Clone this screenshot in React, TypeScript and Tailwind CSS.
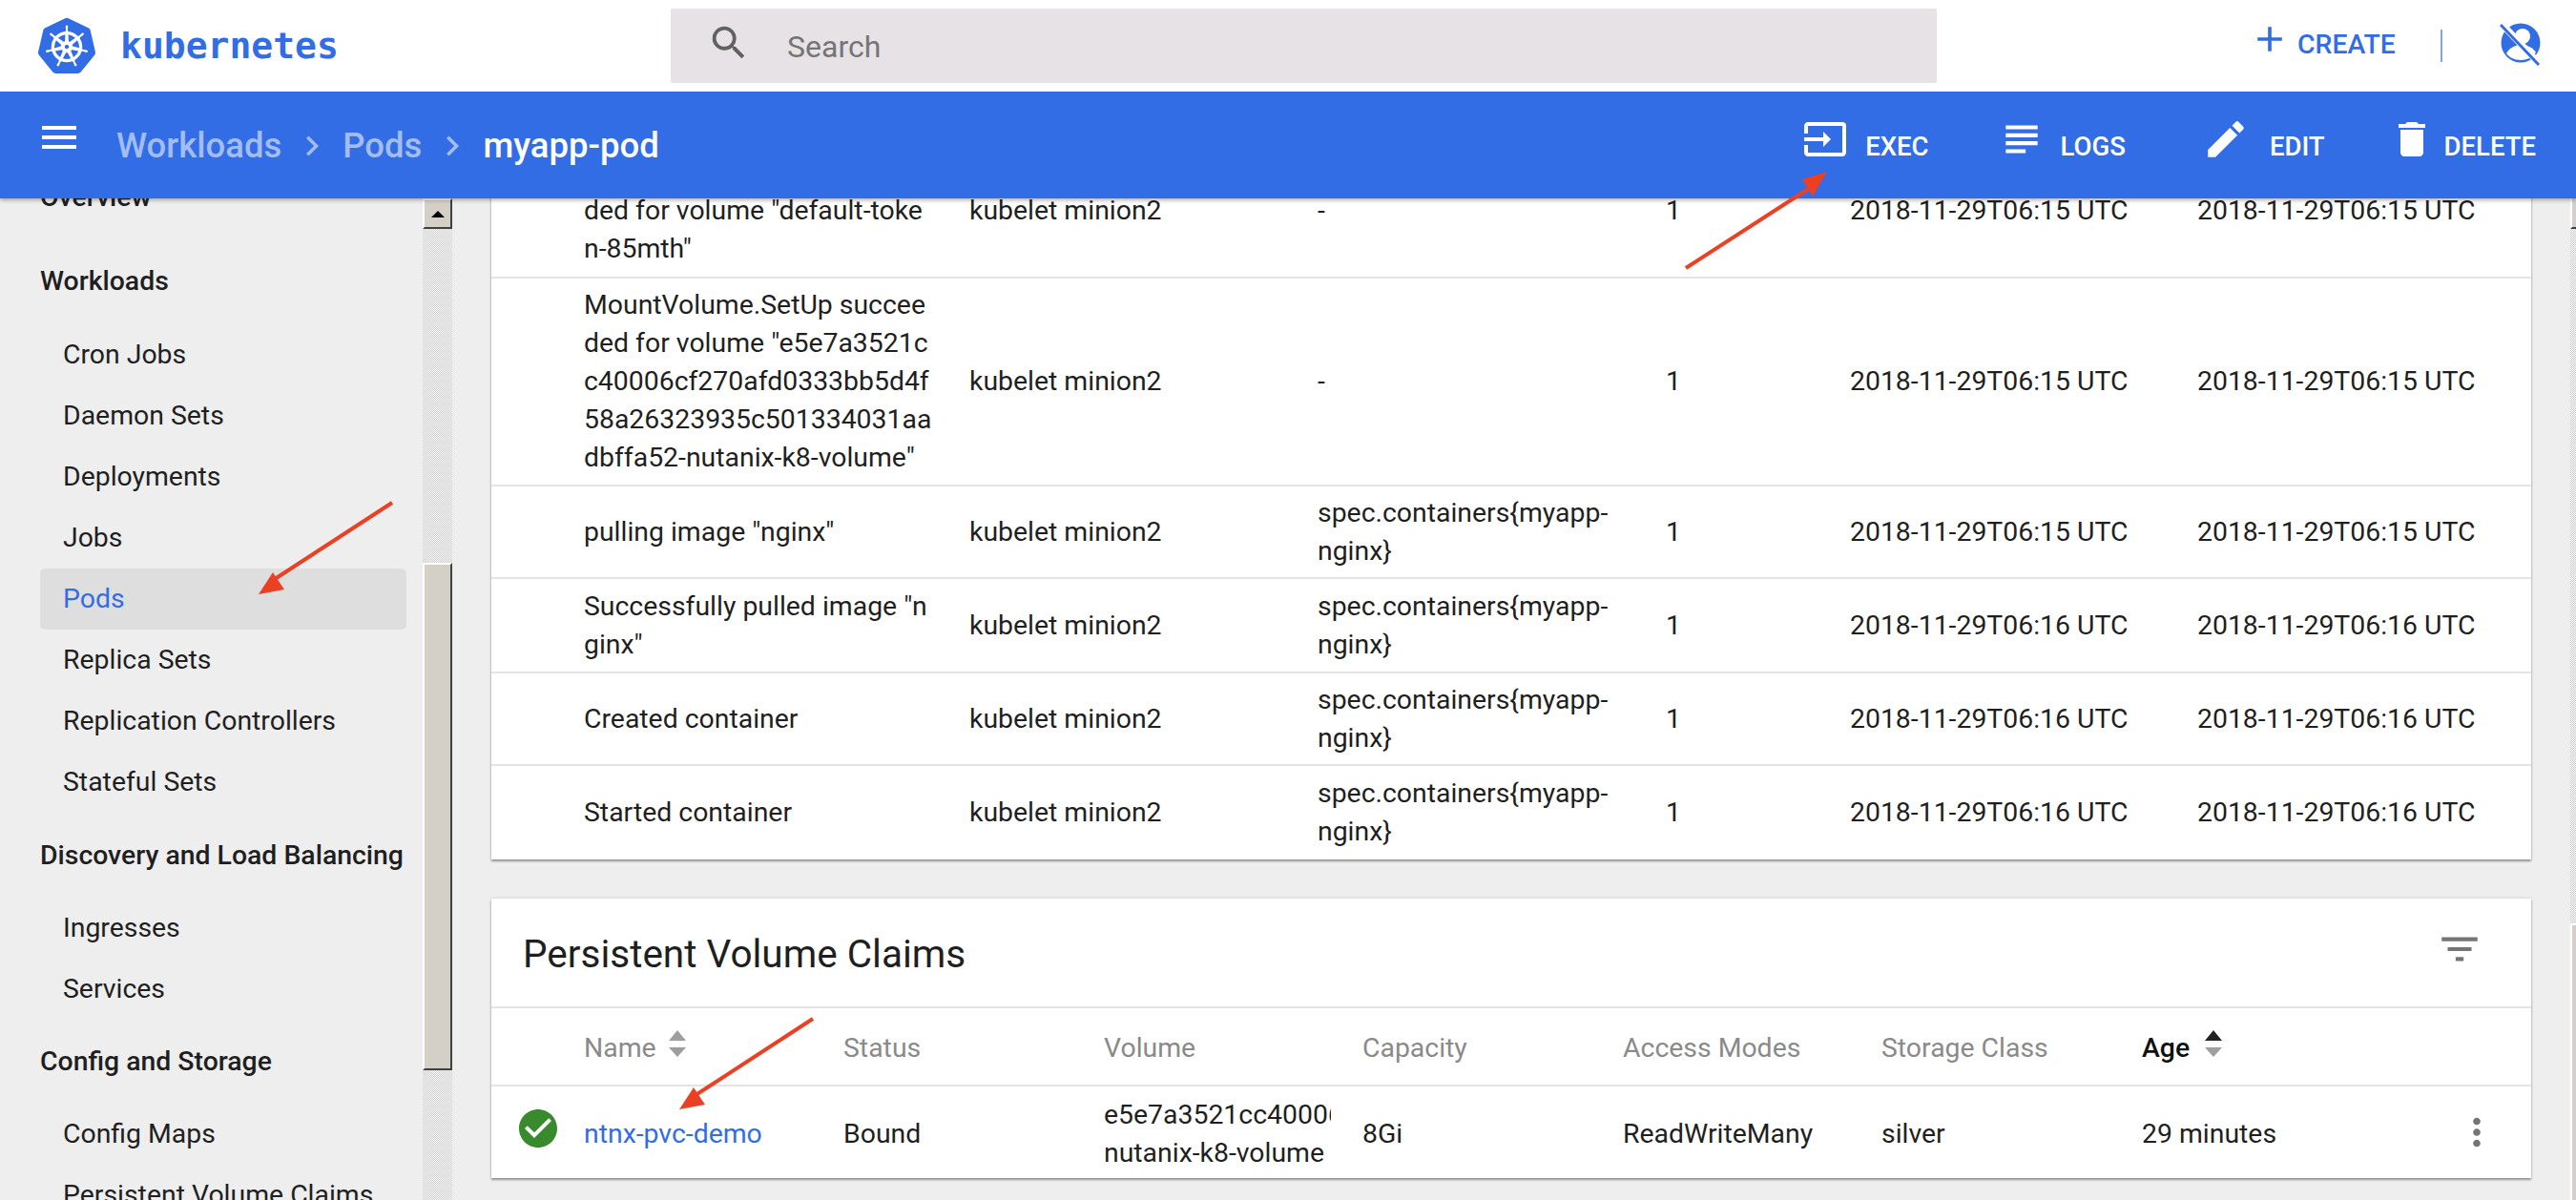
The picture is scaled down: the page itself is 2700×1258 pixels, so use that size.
import React from "react";
import { SiKubernetes } from "react-icons/si";
import {
  MdAdd,
  MdCheckCircle,
  MdChevronRight,
  MdDelete,
  MdEdit,
  MdFilterList,
  MdInput,
  MdMenu,
  MdMoreVert,
  MdSearch,
  MdSubject,
} from "react-icons/md";

const sidebar: { kind: "head" | "item"; label: string; cls?: string; active?: boolean }[] = [
  { kind: "head", label: "Overview", cls: "h-[52px] pt-3" },
  { kind: "head", label: "Workloads", cls: "h-[113px] pt-[48px]" },
  { kind: "item", label: "Cron Jobs" },
  { kind: "item", label: "Daemon Sets" },
  { kind: "item", label: "Deployments" },
  { kind: "item", label: "Jobs" },
  { kind: "item", label: "Pods", active: true },
  { kind: "item", label: "Replica Sets" },
  { kind: "item", label: "Replication Controllers" },
  { kind: "item", label: "Stateful Sets" },
  { kind: "head", label: "Discovery and Load Balancing", cls: "h-[89px] pt-[25px]" },
  { kind: "item", label: "Ingresses" },
  { kind: "item", label: "Services" },
  { kind: "head", label: "Config and Storage", cls: "h-[88px] pt-6" },
  { kind: "item", label: "Config Maps" },
  { kind: "item", label: "Persistent Volume Claims" },
];

const events = [
  {
    h: "h-[138px]",
    msg: ["MountVolume.SetUp succee", 'ded for volume "default-toke', 'n-85mth"'],
    src: ["kubelet minion2"],
    obj: ["-"],
    time: "2018-11-29T06:15 UTC",
  },
  {
    h: "h-[218px]",
    msg: [
      "MountVolume.SetUp succee",
      'ded for volume "e5e7a3521c',
      "c40006cf270afd0333bb5d4f",
      "58a26323935c501334031aa",
      'dbffa52-nutanix-k8-volume"',
    ],
    src: ["kubelet minion2"],
    obj: ["-"],
    time: "2018-11-29T06:15 UTC",
  },
  {
    h: "h-[97px]",
    msg: ['pulling image "nginx"'],
    src: ["kubelet minion2"],
    obj: ["spec.containers{myapp-", "nginx}"],
    time: "2018-11-29T06:15 UTC",
  },
  {
    h: "h-[99px]",
    msg: ['Successfully pulled image "n', 'ginx"'],
    src: ["kubelet minion2"],
    obj: ["spec.containers{myapp-", "nginx}"],
    time: "2018-11-29T06:16 UTC",
  },
  {
    h: "h-[97px]",
    msg: ["Created container"],
    src: ["kubelet minion2"],
    obj: ["spec.containers{myapp-", "nginx}"],
    time: "2018-11-29T06:16 UTC",
  },
  {
    h: "h-[100px]",
    msg: ["Started container"],
    src: ["kubelet minion2"],
    obj: ["spec.containers{myapp-", "nginx}"],
    time: "2018-11-29T06:16 UTC",
  },
];

function Lines({ lines }: { lines: string[] }) {
  return (
    <>
      {lines.map((l) => (
        <div key={l} className="whitespace-nowrap">
          {l}
        </div>
      ))}
    </>
  );
}

function SortArrows({ active }: { active?: boolean }) {
  return (
    <span className="flex flex-col gap-[7px] -mt-[9px]">
      <span
        className={`w-0 h-0 border-x-[9px] border-x-transparent border-b-[11px] ${
          active ? "border-b-[#222222]" : "border-b-[#9e9e9e]"
        }`}
      />
      <span className="w-0 h-0 border-x-[9px] border-x-transparent border-t-[10px] border-t-[#9e9e9e]" />
    </span>
  );
}

function ScrollButton() {
  return (
    <div className="h-8 shrink-0 bg-[#d4d0c8] border-t-2 border-l-2 border-t-white border-l-white border-r-2 border-b-2 border-r-[#404040] border-b-[#404040] flex items-center justify-center">
      <span className="w-0 h-0 border-x-[7px] border-x-transparent border-b-[7px] border-b-black" />
    </div>
  );
}

function ActionButton({
  icon,
  label,
  gap,
  className,
}: {
  icon: React.ReactNode;
  label: string;
  gap: string;
  className: string;
}) {
  return (
    <div className={`flex items-center ${gap} ${className}`}>
      {icon}
      <span className="text-[27.5px] font-medium text-white mt-4">{label}</span>
    </div>
  );
}

export default function App() {
  return (
    <div
      className="relative h-[1258px] w-[2700px] overflow-hidden flex flex-col bg-[#eeeeee] text-[28.4px] leading-[40px] text-[#1f1f1f]"
      style={{ fontFamily: "Roboto, sans-serif" }}
    >
      {/* top bar */}
      <header className="h-24 shrink-0 bg-white flex items-center relative z-20">
        <div className="w-[703px] shrink-0 flex items-center pl-10">
          <SiKubernetes className="w-[60px] h-[60px] text-[#326de6]" />
          <span
            className="ml-[26px] text-[38px] font-bold text-[#326de6] leading-none"
            style={{ fontFamily: '"DejaVu Sans Mono", monospace' }}
          >
            kubernetes
          </span>
        </div>
        <div className="w-[1327px] h-[78px] shrink-0 bg-[#e6e2e5] rounded-[2px] flex items-center pl-[38px] text-[32px] text-[#757575]">
          <MdSearch className="w-[46px] h-[46px] text-[#616161] -mt-[6px]" />
          <span className="ml-[38px] mt-[2px]">Search</span>
        </div>
        <div className="flex items-center text-[#326de6]">
          <MdAdd className="ml-[327px] w-[44px] h-[44px] -mt-[14px]" />
          <span className="ml-[7px] text-[28.4px] font-medium -mt-[2px]">CREATE</span>
          <span className="ml-[47px] w-[2px] h-[34px] bg-[#7fa3f0]" />
          <svg className="ml-[60px] -mt-[4px]" width="44" height="46" viewBox="0 0 44 46">
            <circle cx="22" cy="22" r="20.5" fill="#326de6" />
            <circle cx="24" cy="15" r="8" fill="#ffffff" />
            <path d="M7 33c3-6 10-9 16-9s12 3 15 8c-4 5-9 8-16 8s-12-3-15-7z" fill="#ffffff" />
            <path d="M4 4l35 37" stroke="#ffffff" strokeWidth="7" />
            <path d="M1 3l40 42" stroke="#326de6" strokeWidth="3" />
          </svg>
        </div>
      </header>

      {/* blue breadcrumb bar */}
      <div className="h-[112px] shrink-0 bg-[#326de6] flex items-center relative z-20 shadow-[0_2px_4px_rgba(0,0,0,0.3)]">
        <MdMenu className="ml-[38px] w-12 h-12 text-white -mt-[16px]" />
        <div className="ml-[36px] flex items-center text-[36.5px] font-medium text-[#a3bdf3] mt-[2px]">
          <span>Workloads</span>
          <MdChevronRight className="mx-[11px] w-[42px] h-[42px]" />
          <span>Pods</span>
          <MdChevronRight className="mx-[11px] w-[42px] h-[42px]" />
          <span className="text-white">myapp-pod</span>
        </div>
        <div className="flex-1" />
        <ActionButton
          icon={<MdInput className="w-12 h-12 text-white" />}
          label="EXEC"
          gap="gap-[18px]"
          className="-mt-3"
        />
        <ActionButton
          icon={<MdSubject className="w-[50px] h-[50px] text-white" />}
          label="LOGS"
          gap="gap-4"
          className="ml-[72px] -mt-3"
        />
        <ActionButton
          icon={<MdEdit className="w-[50px] h-[50px] text-white" />}
          label="EDIT"
          gap="gap-[21px]"
          className="ml-[80px] -mt-3"
        />
        <ActionButton
          icon={<MdDelete className="w-12 h-12 text-white" />}
          label="DELETE"
          gap="gap-[10px]"
          className="ml-[67px] mr-[42px] -mt-3"
        />
      </div>

      <div className="flex-1 flex min-h-0">
        {/* side nav */}
        <aside className="w-[443px] shrink-0 overflow-hidden">
          <nav className="-mt-[33px] pl-[42px] pr-[17px]">
            {sidebar.map((s) =>
              s.kind === "head" ? (
                <div key={s.label} className={`font-medium whitespace-nowrap ${s.cls}`}>
                  {s.label}
                </div>
              ) : (
                <div
                  key={s.label}
                  className={`h-16 flex items-center pl-6 rounded-[5px] whitespace-nowrap ${
                    s.active ? "bg-[#dedede] text-[#326de6]" : ""
                  }`}
                >
                  {s.label}
                </div>
              )
            )}
          </nav>
        </aside>

        {/* nav scrollbar */}
        <div className="w-[31px] shrink-0 flex flex-col bg-[repeating-conic-gradient(#c9c9c9_0_25%,#ffffff_0_50%)] bg-size-[2px_2px]">
          <ScrollButton />
          <div className="h-[350px] shrink-0" />
          <div className="h-[532px] shrink-0 bg-[#d4d0c8] border-t-2 border-l-2 border-t-white border-l-white border-r-2 border-b-2 border-r-[#404040] border-b-[#404040]" />
        </div>

        {/* page content */}
        <main className="flex-1 min-w-0 overflow-hidden flex">
          <div className="w-[2138px] ml-[41px] shrink-0">
            <section className="-mt-[56px] bg-white shadow-[0_2px_2px_rgba(0,0,0,0.35),0_0_3px_rgba(0,0,0,0.15)]">
              {events.map((e, i) => (
                <div
                  key={i}
                  className={`${e.h} flex items-center pl-[97px] ${i === 0 ? "" : "border-t-2 border-[#e6e2e5]"}`}
                >
                  <div className="w-[404px] shrink-0">
                    <Lines lines={e.msg} />
                  </div>
                  <div className="w-[365px] shrink-0">
                    <Lines lines={e.src} />
                  </div>
                  <div className="w-[365px] shrink-0">
                    <Lines lines={e.obj} />
                  </div>
                  <div className="w-[193px] shrink-0">1</div>
                  <div className="w-[364px] shrink-0 whitespace-nowrap">{e.time}</div>
                  <div className="whitespace-nowrap">{e.time}</div>
                </div>
              ))}
            </section>

            <section className="mt-[41px] h-[293px] bg-white shadow-[0_2px_2px_rgba(0,0,0,0.35),0_0_3px_rgba(0,0,0,0.15)]">
              <div className="h-[113px] flex items-center justify-between pl-[33px] pr-[50px]">
                <h2 className="text-[40.5px] leading-none font-normal mt-[3px]">Persistent Volume Claims</h2>
                <MdFilterList className="w-[50px] h-[50px] text-[#757575] -mt-[8px]" />
              </div>
              <div className="h-[82px] flex items-center pl-[97px] pt-[3px] border-t-2 border-[#e6e2e5] text-[#8a8a8a]">
                <div className="w-[272px] shrink-0 flex items-center gap-[13px]">
                  Name
                  <SortArrows />
                </div>
                <div className="w-[273px] shrink-0">Status</div>
                <div className="w-[271px] shrink-0">Volume</div>
                <div className="w-[273px] shrink-0">Capacity</div>
                <div className="w-[271px] shrink-0">Access Modes</div>
                <div className="w-[273px] shrink-0">Storage Class</div>
                <div className="flex items-center gap-[16px] text-[#111111] font-medium">
                  Age
                  <SortArrows active />
                </div>
              </div>
              <div className="h-[98px] flex items-center pl-[25px] pt-[3px] border-t-2 border-[#e6e2e5]">
                <MdCheckCircle className="w-[48px] h-[48px] text-[#388a2c] shrink-0 -mt-[12px]" />
                <div className="ml-6 w-[272px] shrink-0 text-[#326de6]">ntnx-pvc-demo</div>
                <div className="w-[273px] shrink-0">Bound</div>
                <div className="w-[238px] mr-[33px] shrink-0 overflow-hidden whitespace-nowrap">
                  <div>e5e7a3521cc40006cf270afd0333bb5d4f</div>
                  <div>nutanix-k8-volume</div>
                </div>
                <div className="w-[273px] shrink-0">8Gi</div>
                <div className="w-[271px] shrink-0">ReadWriteMany</div>
                <div className="w-[273px] shrink-0">silver</div>
                <div className="w-[328px] shrink-0">29 minutes</div>
                <MdMoreVert className="w-[46px] h-[46px] text-[#757575] shrink-0 -mt-1" />
              </div>
            </section>
          </div>
          <div className="flex-1" />
          {/* page scrollbar, only its edge shows */}
          <div className="w-[6px] shrink-0 flex flex-col bg-[repeating-conic-gradient(#c9c9c9_0_25%,#ffffff_0_50%)] bg-size-[2px_2px]">
            <div className="h-8 shrink-0 bg-[#d4d0c8] border-l-2 border-l-white border-b-2 border-b-[#404040]" />
            <div className="h-[728px] shrink-0" />
            <div className="flex-1 bg-[#d4d0c8] border-t-2 border-l-2 border-t-white border-l-white" />
          </div>
        </main>
      </div>

      {/* annotation arrows drawn over the screenshot */}
      <svg className="absolute inset-0 z-30 pointer-events-none" width="2700" height="1258" viewBox="0 0 2700 1258">
        <g stroke="#ea4125" strokeWidth="4" fill="#ea4125">
          <line x1="1767" y1="281" x2="1900" y2="195" />
          <polygon points="1915,180 1889,188 1900,206" stroke="none" />
          <line x1="411" y1="527" x2="285" y2="609" />
          <polygon points="271,623 298,618 286,600" stroke="none" />
          <line x1="852" y1="1068" x2="726" y2="1150" />
          <polygon points="712,1163 739,1158 727,1140" stroke="none" />
        </g>
      </svg>
    </div>
  );
}
